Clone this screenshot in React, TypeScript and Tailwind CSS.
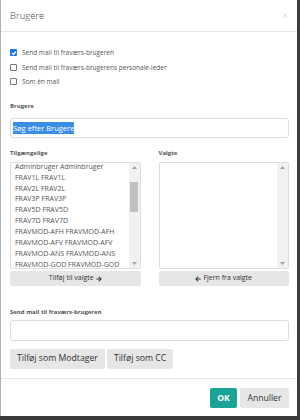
import React from "react";
import { FaArrowRight, FaArrowLeft } from "react-icons/fa";

const items = [
  "Adminbruger Adminbruger",
  "FRAV1L FRAV1L",
  "FRAV2L FRAV2L",
  "FRAV3P FRAV3P",
  "FRAV5D FRAV5D",
  "FRAV7D FRAV7D",
  "FRAVMOD-AFH FRAVMOD-AFH",
  "FRAVMOD-AFV FRAVMOD-AFV",
  "FRAVMOD-ANS FRAVMOD-ANS",
];

function Up() {
  return (
    <svg width="5" height="3" viewBox="0 0 5 3">
      <polygon points="0,3 5,3 2.5,0" fill="#a3a3a3" />
    </svg>
  );
}
function Down() {
  return (
    <svg width="5" height="3" viewBox="0 0 5 3">
      <polygon points="0,0 5,0 2.5,3" fill="#a3a3a3" />
    </svg>
  );
}

function Scrollbar({ thumb }: { thumb: boolean }) {
  return (
    <div className="w-[11px] bg-[#f1f1f1] flex flex-col items-center justify-between py-[3px] shrink-0">
      <div className="flex flex-col items-center w-full">
        <Up />
        {thumb ? <div className="mt-[13px] w-[8px] h-[30px] bg-[#c1c1c1]" /> : null}
      </div>
      <Down />
    </div>
  );
}

function Checkbox({ checked, label }: { checked?: boolean; label: string }) {
  return (
    <div className="flex items-center h-[7px]">
      {checked ? (
        <div className="w-[7px] h-[7px] rounded-[1px] bg-[#1a73e8] flex items-center justify-center">
          <svg width="6" height="6" viewBox="0 0 6 6">
            <polyline points="1,3 2.5,4.5 5,1.5" fill="none" stroke="white" strokeWidth="1.2" />
          </svg>
        </div>
      ) : (
        <div className="w-[7px] h-[7px] rounded-[1px] border border-[#777] bg-white" />
      )}
      <span className="ml-[5px] text-[6.5px] leading-[7px] text-[#555]">{label}</span>
    </div>
  );
}

export default function App() {
  return (
    <div
      className="w-[300px] h-[420px] bg-[#3b3b3b] overflow-hidden"
      style={{ fontFamily: '"Open Sans", "Liberation Sans", sans-serif' }}
    >
      <div className="w-[297px] h-[416px] bg-white border-l border-[#b0b0b0] flex flex-col">
        {/* Header */}
        <div className="h-[32px] border-b border-[#e5e5e5] flex items-center justify-between pl-[9px] pr-[9px] shrink-0">
          <span className="text-[9.5px] leading-none text-[#444] font-light">Brugere</span>
          <span className="text-[9px] leading-none text-[#bbb] font-light">×</span>
        </div>

        {/* Body */}
        <div className="flex-1 pl-[9px] pr-[8px] flex flex-col">
          <div className="mt-[17px]">
            <Checkbox checked label="Send mail til fraværs-brugeren" />
          </div>
          <div className="mt-[8px]">
            <Checkbox label="Send mail til fraværs-brugerens personale-leder" />
          </div>
          <div className="mt-[7px]">
            <Checkbox label="Som én mail" />
          </div>

          <div className="mt-[16.5px] text-[6px] leading-[8px] font-bold text-[#555]">Brugere</div>
          <div className="mt-[8.5px] h-[20px] border border-[#ddd] rounded-[3px] flex items-center pl-[2px]">
            <span className="bg-[#3a8ee6] text-white text-[7.5px] leading-[12px]">Søg efter Brugere</span>
          </div>

          <div className="mt-[10.5px] grid grid-cols-2 gap-x-[18px]">
            <div className="text-[6px] leading-[8px] font-bold text-[#555]">Tilgængelige</div>
            <div className="text-[6px] leading-[8px] font-bold text-[#555]">Valgte</div>
            <div className="mt-[5.5px] h-[107px] border border-[#ddd] rounded-[2px] flex overflow-hidden">
              <div className="flex-1 pl-[4px] -mt-[1.3px] overflow-hidden">
                {items.map((it) => (
                  <div key={it} className="text-[7px] leading-[10.9px] text-[#555] whitespace-nowrap">
                    {it}
                  </div>
                ))}
                <div className="mt-[1.5px] text-[7px] leading-[8px] text-[#555] whitespace-nowrap">
                  FRAVMOD-GOD FRAVMOD-GOD
                </div>
              </div>
              <Scrollbar thumb />
            </div>
            <div className="mt-[5.5px] h-[107px] border border-[#ddd] rounded-[2px] flex overflow-hidden">
              <div className="flex-1" />
              <Scrollbar thumb={false} />
            </div>
            <button className="mt-[2px] h-[15px] bg-[#e6e6e6] rounded-[2px] flex items-center justify-center text-[7px] text-[#333]">
              Tilføj til valgte
              <FaArrowRight className="ml-[2px]" size={6} />
            </button>
            <button className="mt-[2px] h-[15px] bg-[#e6e6e6] rounded-[2px] flex items-center justify-center text-[7px] text-[#333]">
              <FaArrowLeft className="mr-[2px]" size={6} />
              Fjern fra valgte
            </button>
          </div>

          <div className="mt-[21.5px] text-[6px] leading-[8px] font-bold text-[#555]">
            Send mail til fraværs-brugeren
          </div>
          <div className="mt-[4.5px] h-[21px] border border-[#ddd] rounded-[3px]" />

          <div className="mt-[8px] flex gap-[2px]">
            <button className="h-[20px] px-[7px] bg-[#e6e6e6] rounded-[2px] text-[8.7px] text-[#333]">
              Tilføj som Modtager
            </button>
            <button className="h-[20px] px-[7px] bg-[#e6e6e6] rounded-[2px] text-[8.7px] text-[#333]">
              Tilføj som CC
            </button>
          </div>
        </div>

        {/* Footer */}
        <div className="h-[38px] border-t border-[#e5e5e5] flex justify-end items-start pt-[9px] pr-[8px] gap-[3px] shrink-0">
          <button className="h-[20px] w-[27px] bg-[#1aa396] rounded-[2px] text-[8.6px] font-bold text-white">
            OK
          </button>
          <button className="h-[20px] w-[49px] bg-[#e6e6e6] rounded-[2px] text-[8.6px] text-[#333]">
            Annuller
          </button>
        </div>
      </div>
    </div>
  );
}
